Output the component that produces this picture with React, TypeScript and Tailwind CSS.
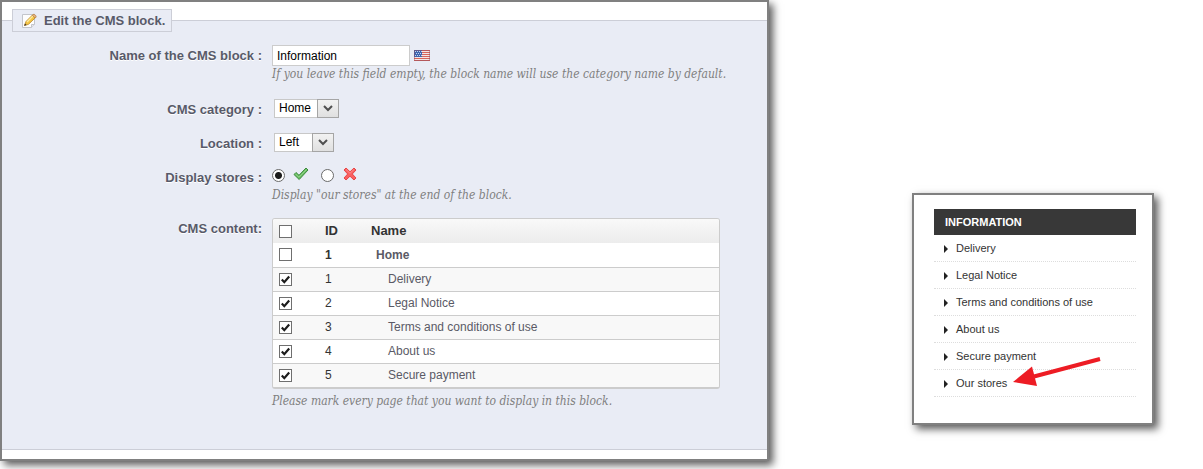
import React from "react";

interface CmsPage {
    id: number;
    name: string;
    checked: boolean;
}

const pages: CmsPage[] = [
    { id: 1, name: "Delivery", checked: true },
    { id: 2, name: "Legal Notice", checked: true },
    { id: 3, name: "Terms and conditions of use", checked: true },
    { id: 4, name: "About us", checked: true },
    { id: 5, name: "Secure payment", checked: true },
];

const links = [...pages.map((p) => p.name), "Our stores"];

const EditIcon = () => (
    <svg width="16" height="16" viewBox="0 0 16 16" aria-hidden="true">
        <path d="M1.5 1.500h12v10l-3 3h-9z" fill="#fdfdfd" stroke="#c3c5cb" />
        <path d="M10.5 14.500v-3h3" fill="#e6e6ea" stroke="#c3c5cb" />
        <path d="M3.5 12.500 5 8.500l6.500-6.500c1-1 3.800 1.500 2.800 2.800L7.500 11.300z" fill="#f5c542" stroke="#b8862b" strokeWidth="0.8" />
        <path d="M6 9 12 3" stroke="#fdeba0" strokeWidth="1.3" />
        <path d="m11.300 2.300 2.800 2.800 1-1c.8-1-1.800-3.500-2.800-2.800z" fill="#e6b07a" stroke="#a87743" strokeWidth="0.6" />
        <path d="m3.200 12.800.8-2.300 1.600 1.500z" fill="#3c3126" />
    </svg>
);

const FlagIcon = () => (
    <svg width="16" height="11" viewBox="0 0 16 11" aria-hidden="true">
        <path d="M0 0h16v11H0z" fill="#f3e6e6" />
        <path d="M0 .5h16M0 2.500h16M0 4.500h16M0 6.500h16M0 8.500h16M0 10.500h16" stroke="#d6655c" />
        <path d="M0 0h8v7H0z" fill="#3f66b0" />
        <path d="M1 1.500h7M2 3.500h6M1 5.500h7" stroke="#c4d3ee" strokeDasharray="1 1" />
        <path d="M.5.500h15v10H.5z" fill="none" stroke="#8b4a5c" strokeOpacity="0.45" />
    </svg>
);

const YesIcon = () => (
    <svg width="16" height="14" viewBox="0 0 16 14" aria-hidden="true">
        <path d="m1 7.500 2-2L6 8.300 13 1l2 2-8.800 9.500z" fill="#69bd62" stroke="#3b8a3c" strokeLinejoin="round" />
        <path d="m2.500 7 3.500 3.200L13.500 2.500" fill="none" stroke="#93d68a" />
    </svg>
);

const NoIcon = () => (
    <svg width="14" height="14" viewBox="0 0 14 14" aria-hidden="true">
        <path d="m3 1 4 3.800L11 1l2 2-3.700 4L13 11l-2 2-4-3.800L3 13l-2-2 3.700-4L1 3z" fill="#fa6060" stroke="#e84545" strokeLinejoin="round" />
        <path d="m3 2.500 4 3.800 4-3.800" fill="none" stroke="#ff8c8c" />
    </svg>
);

const Hint = ({ children }: { children: React.ReactNode }) => (
    <p className="font-['DejaVu_Serif_Condensed','DejaVu_Serif',serif] text-[12px] leading-4 text-[#7f7f7f] italic">
        {children}
    </p>
);

const Label = ({ htmlFor, children }: { htmlFor: string; children: React.ReactNode }) => (
    <label
        htmlFor={htmlFor}
        className="text-right text-[13px] leading-[21px] font-bold text-[#585a69] [text-shadow:0_1px_0_#fff]"
    >
        {children}
    </label>
);

const Checkbox = ({ id, label, checked }: { id?: string; label: string; checked?: boolean }) => (
    <span className="grid size-[13px]">
        <input
            id={id}
            type="checkbox"
            aria-label={label}
            defaultChecked={checked}
            className="peer col-start-1 row-start-1 size-[13px] appearance-none border border-[#6f6f6f] bg-white"
        />
        <svg
            viewBox="0 0 13 13"
            className="pointer-events-none invisible col-start-1 row-start-1 size-[13px] peer-checked:visible"
            aria-hidden="true"
        >
            <path d="m2.800 6.500 2.500 2.700L10.200 3.500" fill="none" stroke="#1c1c1c" strokeWidth="2.2" />
        </svg>
    </span>
);

const Radio = ({ id, label, checked }: { id: string; label: string; checked?: boolean }) => (
    <input
        id={id}
        type="radio"
        name="stores"
        aria-label={label}
        defaultChecked={checked}
        className="mt-0.5 size-[13px] appearance-none rounded-full border border-[#6a6a6a] bg-white checked:bg-[radial-gradient(circle,#1c1c1c_3px,#fff_4px)]"
    />
);

const Select = ({ id, options }: { id: string; options: string[] }) => (
    <span className="relative ml-0.5 inline-flex">
        <select
            id={id}
            className="h-[19px] min-w-[60px] appearance-none border border-[#c8c8c8] bg-white pr-[26px] pl-1 text-[12px] leading-[17px] text-black"
        >
            {options.map((o) => (
                <option key={o}>{o}</option>
            ))}
        </select>
        <span className="pointer-events-none absolute inset-y-0 right-0 flex w-[22px] items-center justify-center border border-[#a5a5a5] bg-linear-to-b from-[#f2f2f2] to-[#e0e0e0]">
            <svg width="10" height="7" viewBox="0 0 10 7" aria-hidden="true">
                <path d="m1 1 4 4 4-4" fill="none" stroke="#505050" strokeWidth="2" />
            </svg>
        </span>
    </span>
);

const CmsTable = () => (
    <div className="w-full max-w-[448px] overflow-hidden rounded-[3px] border border-b-2 border-[#cccccc] bg-white">
        <table className="w-full table-fixed border-collapse text-left">
            <colgroup>
                <col className="w-[52px]" />
                <col className="w-[46px]" />
                <col />
            </colgroup>
            <thead>
                <tr className="h-6 bg-linear-to-b from-[#f9f9f9] to-[#ececec] text-[13px] text-[#333333]">
                    <th className="pl-1.5"><Checkbox id="content" label="Select all" /></th>
                    <th>ID</th>
                    <th>Name</th>
                </tr>
            </thead>
            <tbody className="text-[12px] text-[#5a5a66]">
                <tr className="h-6 border-b border-[#cccccc] font-bold">
                    <td className="pl-1.5"><Checkbox label="Home" /></td>
                    <td className="text-[#333333]">1</td>
                    <td className="pl-[5px]">Home</td>
                </tr>
                {pages.map((page) => (
                    <tr key={page.id} className="h-6 border-b border-[#cccccc] last:border-b-0 odd:bg-white even:bg-[#f8f8f8]">
                        <td className="pl-1.5"><Checkbox label={page.name} checked={page.checked} /></td>
                        <td className="text-[#333333]">{page.id}</td>
                        <td className="pl-[17px]">{page.name}</td>
                    </tr>
                ))}
            </tbody>
        </table>
    </div>
);

const EditPanel = () => (
    <form className="border-2 border-[#808080] bg-white pt-[7px] pb-[9px] shadow-[4px_4px_8px_rgba(0,0,0,0.65)]">
        <fieldset className="min-w-0 border-y border-[#ccced7] bg-[#e9ecf5] pb-10">
            <legend className="ml-2.5 flex h-[23px] items-center gap-[7px] border border-[#ccced7] bg-[#e9ecf5] px-2 pr-1.5 text-[13px] font-bold text-[#585a69]">
                <EditIcon />
                Edit the CMS block.
            </legend>

            <div className="grid grid-cols-[260px_minmax(0,1fr)] gap-x-2.5 pt-[13px]">
                <Label htmlFor="name">Name of the CMS block :</Label>
                <div className="mb-[17px]">
                    <div className="flex items-center gap-1">
                        <input
                            id="name"
                            type="text"
                            defaultValue="Information"
                            className="h-[21px] w-[138px] border border-[#cccccc] bg-white px-1 text-[12px] text-black"
                        />
                        <FlagIcon />
                    </div>
                    <Hint>If you leave this field empty, the block name will use the category name by default.</Hint>
                </div>

                <Label htmlFor="category">CMS category :</Label>
                <div className="mb-[15px] flex items-start">
                    <Select id="category" options={["Home"]} />
                </div>

                <Label htmlFor="location">Location :</Label>
                <div className="mb-[15px] flex items-start">
                    <Select id="location" options={["Left"]} />
                </div>

                <Label htmlFor="stores-on">Display stores :</Label>
                <div className="mb-[15px]">
                    <div className="flex h-5 items-start">
                        <Radio id="stores-on" label="Yes" checked />
                        <label htmlFor="stores-on" className="mr-3 ml-2"><YesIcon /></label>
                        <Radio id="stores-off" label="No" />
                        <label htmlFor="stores-off" className="ml-[9px]"><NoIcon /></label>
                    </div>
                    <Hint>Display "our stores" at the end of the block.</Hint>
                </div>

                <Label htmlFor="content">CMS content:</Label>
                <div>
                    <div className="mb-1"><CmsTable /></div>
                    <Hint>Please mark every page that you want to display in this block.</Hint>
                </div>
            </div>
        </fieldset>
    </form>
);

const InformationBlock = () => (
    <aside className="relative mt-[193px] border-2 border-[#808080] bg-white pt-3.5 pr-4 pb-[26px] pl-5 text-[11px] text-[#333333] shadow-[4px_4px_8px_rgba(0,0,0,0.65)]">
        <h2 className="bg-[#383838] pl-[11px] leading-[26px] font-bold text-white">INFORMATION</h2>
        <ul>
            {links.map((link) => (
                <li key={link} className="border-b border-dotted border-[#dddddd]">
                    <a href="#" className="flex h-[26px] items-center gap-2 pt-px pl-2.5">
                        <svg width="4" height="8" viewBox="0 0 4 8" aria-hidden="true">
                            <path d="M0 0v8l4-4z" fill="#222222" />
                        </svg>
                        {link}
                    </a>
                </li>
            ))}
        </ul>
        {/* pointer to the stores link */}
        <svg
            width="90"
            height="32"
            viewBox="0 0 90 32"
            className="pointer-events-none absolute bottom-[34px] left-[98px]"
            aria-hidden="true"
        >
            <path d="M22 19.500 88 2" stroke="#ed1c24" strokeWidth="4" />
            <path d="M1 25 20 9.500 25 29z" fill="#ed1c24" />
        </svg>
    </aside>
);

export default function App() {
    return (
        <main className="grid grid-cols-[minmax(0,769px)_242px] items-start justify-between bg-white pr-[49px] pb-2 font-['Liberation_Sans',Arial,sans-serif]">
            <EditPanel />
            <InformationBlock />
        </main>
    );
}
